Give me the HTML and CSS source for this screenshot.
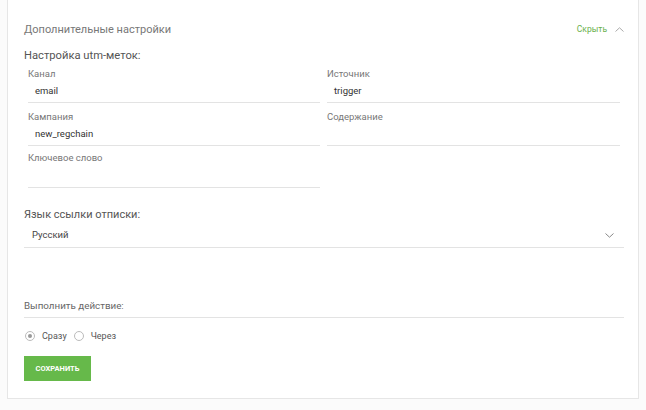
FILE: index.html
```html
<!DOCTYPE html>
<html lang="ru">
<head>
  <meta charset="UTF-8" />
  <title>Дополнительные настройки</title>
  <link rel="stylesheet" href="styles.css">
</head>
<body>
  <div class="card">
    <div class="card-head">
      <span class="card-title">Дополнительные настройки</span>
      <a class="toggle" href="#">Скрыть
        <svg width="9" height="5" viewBox="0 0 9 5"><path d="M0.5 4.5 L4.5 0.8 L8.5 4.5" fill="none" stroke="#aaa" stroke-width="1"/></svg>
      </a>
    </div>

    <h3 class="group-title">Настройка utm-меток:</h3>
    <div class="utm-grid">
      <div class="field">
        <label>Канал</label>
        <div class="value">email</div>
      </div>
      <div class="field">
        <label>Источник</label>
        <div class="value">trigger</div>
      </div>
      <div class="field">
        <label>Кампания</label>
        <div class="value">new_regchain</div>
      </div>
      <div class="field">
        <label>Содержание</label>
        <div class="value"></div>
      </div>
      <div class="field tall">
        <label>Ключевое слово</label>
        <div class="value"></div>
      </div>
    </div>

    <h3 class="group-title lang-title">Язык ссылки отписки:</h3>
    <div class="select">
      <span>Русский</span>
      <svg width="9" height="5" viewBox="0 0 9 5"><path d="M0.5 0.5 L4.5 4.2 L8.5 0.5" fill="none" stroke="#888" stroke-width="1"/></svg>
    </div>

    <div class="action-label">Выполнить действие:</div>
    <div class="radios">
      <label class="radio"><span class="dot checked"></span>Сразу</label>
      <label class="radio"><span class="dot"></span>Через</label>
    </div>

    <button class="save-btn">СОХРАНИТЬ</button>
  </div>
</body>
</html>
```

FILE: styles.css
```css
body { margin: 0; background: #fbfbfb; font-family: Roboto, "Noto Sans", sans-serif; color: #555; }
.card { margin: 0 0 0 7px; width: 632px; height: 399px; background: #fff; border: 1px solid #e6e6e6; border-top: none; padding: 22px 14px 0 16px; box-sizing: border-box; }
.card-head { display: flex; justify-content: space-between; align-items: center; height: 14px; }
.card-title { font-size: 11px; color: #777; }
.toggle { font-size: 8.5px; color: #6ab04c; text-decoration: none; display: flex; align-items: center; gap: 8px; }
.group-title { font-size: 11.2px; line-height: 16px; font-weight: normal; color: #555; margin: 12px 0 0 0; }
.utm-grid { display: grid; grid-template-columns: 292px 293px; column-gap: 7px; row-gap: 8px; padding-left: 4px; margin-top: 4px; }
.field label { display: block; font-size: 9.5px; color: #777; line-height: 12px; }
.field .value { font-size: 9.5px; color: #333; padding: 5px 7px 5px; height: 12px; line-height: 12px; border-bottom: 1px solid #e3e3e3; }
.field.tall { margin-top: -2px; }
.field.tall .value { height: 13px; }
.lang-title { margin-top: 19px; font-size: 11px; }
.select { display: flex; justify-content: space-between; align-items: center; font-size: 9.5px; line-height: 12px; color: #444; padding: 6px 10px 6px 8px; border-bottom: 1px solid #e3e3e3; }
.action-label { font-size: 9.8px; line-height: 12px; color: #666; margin-top: 52px; padding-bottom: 5px; border-bottom: 1px solid #e3e3e3; }
.radios { display: flex; gap: 6px; margin-top: 12px; height: 12px; font-size: 9px; color: #555; }
.radio { display: flex; align-items: center; gap: 7px; margin-left: 1px; }
.dot { width: 10px; height: 10px; border: 1px solid #bbb; border-radius: 50%; box-sizing: border-box; display: flex; align-items: center; justify-content: center; }
.dot.checked::after { content: ""; width: 4px; height: 4px; border-radius: 50%; background: #999; }
.save-btn { display: block; margin-top: 14px; width: 67px; height: 25px; border: none; background: #66b94a; color: #fff; font-family: Roboto, sans-serif; font-size: 7.5px; font-weight: bold; padding: 0; }
```
